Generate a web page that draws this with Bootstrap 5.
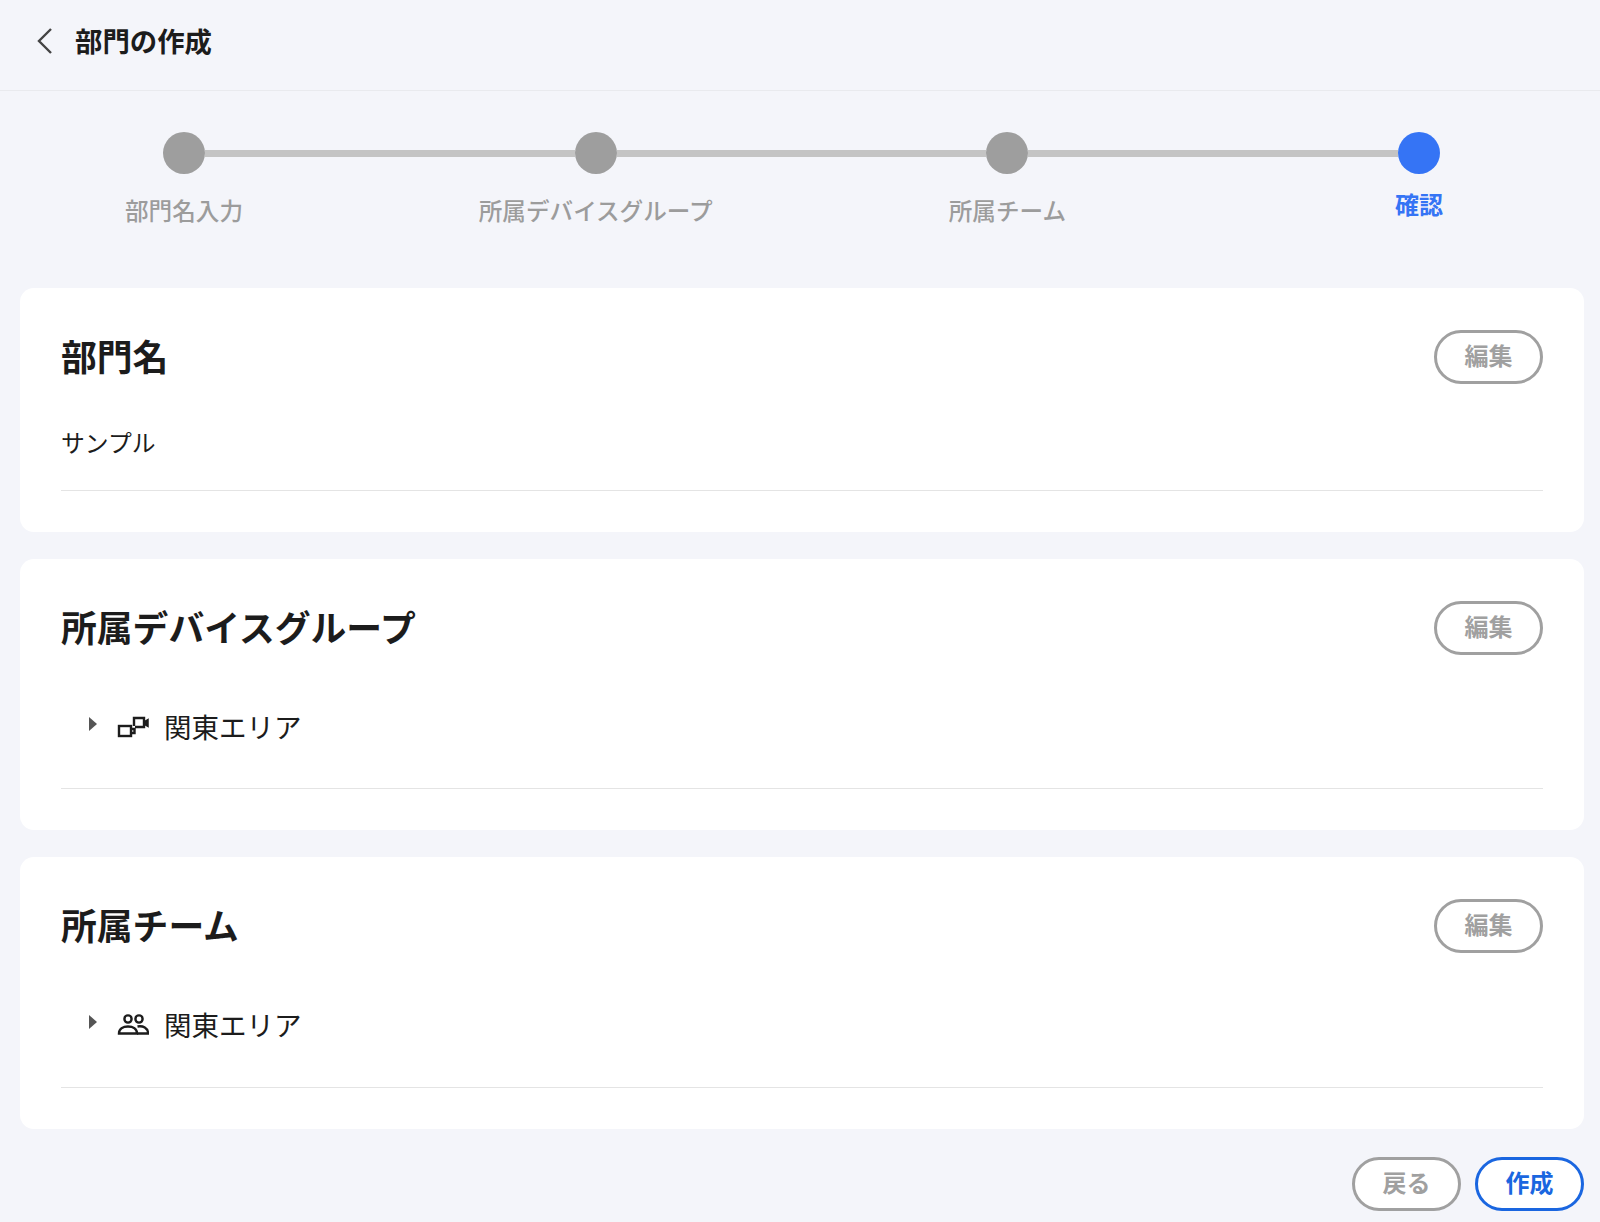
<!DOCTYPE html>
<html lang="ja">
<head>
<meta charset="utf-8">
<title>部門の作成</title>
<link href="https://cdn.jsdelivr.net/npm/bootstrap@5.3.0/dist/css/bootstrap.min.css" rel="stylesheet">
<style>
html,body{height:100%}
body{background:#f4f5fa;font-family:"Noto Sans CJK JP","Liberation Sans",sans-serif;color:#1c1c1c;overflow:hidden}
.top-bar{height:91px;border-bottom:1px solid #e9eaee;padding-left:36px;gap:21px}
.top-title{font-size:27.4px;font-weight:700;line-height:1;margin:0;position:relative;top:-4px}
.back-ico{width:18px;height:28px;position:relative;top:-4px}
.stepper{padding:41px 160px 0 163px;height:197px}
.step{width:42px;flex:0 0 42px}
.dot{width:42px;height:42px;border-radius:50%;background:#9e9e9e;flex:none}
.dot-on{background:#3574f5}
.step-label{font-size:23.6px;line-height:1;color:#9c9c9c;white-space:nowrap;margin-top:25px;font-weight:500}
.step-label-on{color:#3574f5;font-weight:700;margin-top:18px;font-size:24px}
.connector{flex:1 1 auto;height:7px;background:#c4c4c4;margin-top:18px}
.sheet{margin:0 16px 27px 20px;padding:42px 41px 41px 41px;border:0;border-radius:14px;background:#fff}
.sheet-title{font-size:35.8px;font-weight:700;line-height:54px;margin:0;color:#1c1c1c;position:relative;top:-2px}
.pill{width:109px;height:54px;padding:0 0 4px;border:3px solid #a0a0a0;border-radius:27px;background:#fff;color:#a0a0a0;font-size:24px;font-weight:700;line-height:1}
.pill:hover{background:#fff;color:#a0a0a0;border-color:#a0a0a0}
.pill-main{border-color:#1a66e0;color:#1a66e0}
.pill-main:hover{border-color:#1a66e0;color:#1a66e0}
.plain-value{font-size:23.8px;line-height:1;padding-top:46px;padding-bottom:36px;border-bottom:1px solid #e4e4e4}
.tree-row{padding:53px 0 43px 28px;border-bottom:1px solid #e4e4e4;height:134px}
.tree-row-tall{height:135px;padding-bottom:44px}
.caret{width:0;height:0;border-left:8px solid #555;border-top:7px solid transparent;border-bottom:7px solid transparent;flex:none;position:relative;top:-2px;margin-right:20px}
.tree-ico{width:32px;height:24px;flex:none;margin-right:15px;position:relative;top:1px}
.tree-text{font-size:27.5px;line-height:1;white-space:nowrap}
.foot{padding:0 16px 0 0;gap:14px;margin-top:28px}
</style>
</head>
<body>
<header class="top-bar d-flex align-items-center">
  <svg class="back-ico" viewBox="0 0 18 28" fill="none" stroke="#444" stroke-width="2.4"><path d="M15 2 3 14l12 12"/></svg>
  <h1 class="top-title">部門の作成</h1>
</header>

<div class="stepper d-flex align-items-start">
  <div class="step d-flex flex-column align-items-center"><div class="dot"></div><div class="step-label">部門名入力</div></div>
  <div class="connector"></div>
  <div class="step d-flex flex-column align-items-center"><div class="dot"></div><div class="step-label">所属デバイスグループ</div></div>
  <div class="connector"></div>
  <div class="step d-flex flex-column align-items-center"><div class="dot"></div><div class="step-label">所属チーム</div></div>
  <div class="connector"></div>
  <div class="step d-flex flex-column align-items-center"><div class="dot dot-on"></div><div class="step-label step-label-on">確認</div></div>
</div>

<section class="card sheet">
  <div class="d-flex justify-content-between align-items-center">
    <h2 class="sheet-title">部門名</h2>
    <button type="button" class="btn pill">編集</button>
  </div>
  <div class="plain-value">サンプル</div>
</section>

<section class="card sheet">
  <div class="d-flex justify-content-between align-items-center">
    <h2 class="sheet-title">所属デバイスグループ</h2>
    <button type="button" class="btn pill">編集</button>
  </div>
  <div class="tree-row d-flex align-items-center">
    <span class="caret"></span>
    <svg class="tree-ico" viewBox="0 0 32 24" fill="none" stroke="#1c1c1c" stroke-width="2.400"><rect x="2" y="11" width="12" height="10"/><path d="M14 14h3.500v4H14"/><path d="M17 11V3h10v9h-9"/><path d="M27 7l4-2.500v7L27 9" fill="#1c1c1c" stroke-width="1.500"/></svg>
    <span class="tree-text">関東エリア</span>
  </div>
</section>

<section class="card sheet">
  <div class="d-flex justify-content-between align-items-center">
    <h2 class="sheet-title">所属チーム</h2>
    <button type="button" class="btn pill">編集</button>
  </div>
  <div class="tree-row tree-row-tall d-flex align-items-center">
    <span class="caret"></span>
    <svg class="tree-ico" viewBox="0 0 32 24" fill="none" stroke="#1c1c1c" stroke-width="2.400"><circle cx="11" cy="6" r="3.600"/><circle cx="22" cy="6" r="3.600"/><path d="M2 20.500c0-4.500 4-7 9-7s9 2.500 9 7z"/><path d="M20.500 13.500c5.500-1 10.500 1.500 10.500 7h-11"/></svg>
    <span class="tree-text">関東エリア</span>
  </div>
</section>

<div class="foot d-flex justify-content-end">
  <button type="button" class="btn pill">戻る</button>
  <button type="button" class="btn pill pill-main">作成</button>
</div>
<script src="https://cdn.jsdelivr.net/npm/bootstrap@5.3.0/dist/js/bootstrap.bundle.min.js"></script>
</body>
</html>
